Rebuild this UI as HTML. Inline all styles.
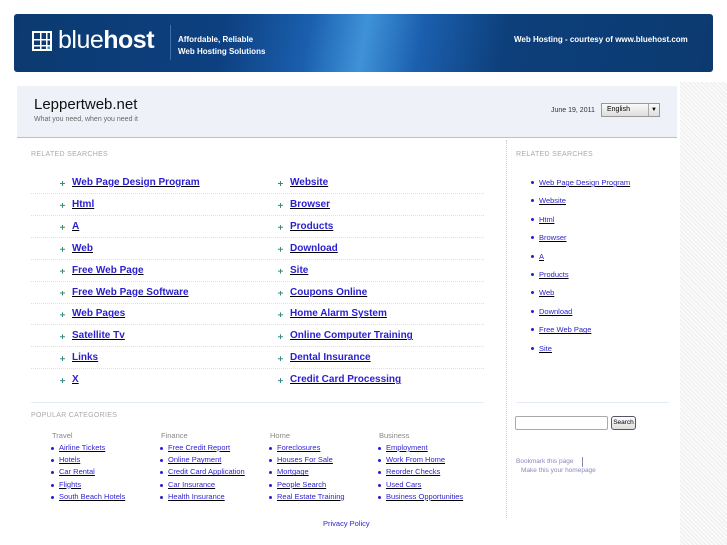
<!DOCTYPE html>
<html><head><meta charset="utf-8"><style>
*{margin:0;padding:0;box-sizing:border-box}
body{width:727px;height:545px;background:#fff;font-family:"Liberation Sans",sans-serif;position:relative;overflow:hidden}
.abs{position:absolute;white-space:nowrap}
a{color:#2a1fd0}
.banner{left:14px;top:14px;width:699px;height:58px;border-radius:3px;background:linear-gradient(100deg,#0c3a70 0%,#0d4080 30%,#1a5fae 42%,#3f92d8 50%,#1b5fae 58%,#0d3f7a 70%,#0c3a70 100%)}
.strip{left:680px;top:82px;width:47px;height:463px;background:repeating-linear-gradient(45deg,#eee 0 1px,#fafafa 1px 3px)}
.hdr{left:17px;top:86px;width:660px;height:52px;background:#eef2f8;border-bottom:1px solid #a9c2e6}
.lbl{font-size:7px;color:#aaa;letter-spacing:.3px}
.rl{font-size:10px;font-weight:bold;text-decoration:underline}
.bul{width:5px;height:5px;background:#3a8a82;clip-path:polygon(40% 0,60% 0,60% 40%,100% 40%,100% 60%,60% 60%,60% 100%,40% 100%,40% 60%,0 60%,0 40%,40% 40%)}
.div{left:31px;width:453px;height:0;border-top:1px dotted #dde}
.sl{font-size:7.5px;text-decoration:underline}
.dot{width:3px;height:3px;border-radius:50%;background:#2a1fd0}
</style></head><body>
<div class="abs banner"></div>
<div class="abs" style="left:32px;top:31px;width:20px;height:20px;border:2px solid #fff;background:linear-gradient(#fff,#fff) 6px 0/1.5px 100% no-repeat,linear-gradient(#fff,#fff) 12px 0/1.5px 100% no-repeat,linear-gradient(#fff,#fff) 0 6px/100% 1.5px no-repeat,linear-gradient(#fff,#fff) 0 12px/100% 1.5px no-repeat,linear-gradient(#29a3c8,#29a3c8) 13px 13px/4px 4px no-repeat"></div>
<div class="abs" style="left:58px;top:26px;font-size:25px;color:#fff;letter-spacing:-.5px">blue<b>host</b></div>
<div class="abs" style="left:170px;top:25px;width:1px;height:35px;background:#3f6fa8"></div>
<div class="abs" style="left:178px;top:34px;font-size:8px;color:#fff;font-weight:bold;line-height:12px">Affordable, Reliable<br>Web Hosting Solutions</div>
<div class="abs" style="left:514px;top:35px;font-size:8px;color:#fff;font-weight:bold">Web Hosting - courtesy of www.bluehost.com</div>
<div class="abs strip"></div>
<div class="abs hdr"></div>
<div class="abs" style="left:34px;top:96px;font-size:15px;color:#111">Leppertweb.net</div>
<div class="abs" style="left:34px;top:116px;font-size:7px;color:#666">What you need, when you need it</div>
<div class="abs" style="left:551px;top:107px;font-size:7px;color:#333">June 19, 2011</div>
<div class="abs" style="left:601px;top:103px;width:59px;height:14px;border:1px solid #999;background:linear-gradient(#fafafa,#ddd);font-size:7px;padding:2px 5px">English</div>
<div class="abs" style="left:648px;top:104px;width:11px;height:12px;border-left:1px solid #aaa;font-size:6px;text-align:center;line-height:12px">▼</div>
<div class="abs" style="left:506px;top:140px;height:378px;border-left:1px dotted #ccd"></div>
<div class="abs lbl" style="left:31px;top:151px">RELATED SEARCHES</div>
<div class="abs lbl" style="left:516px;top:151px">RELATED SEARCHES</div>
<div id="rs"></div>
<div class="abs" style="left:31px;top:402px;width:453px;border-top:1px solid #e6ecf5"></div>
<div class="abs" style="left:516px;top:402px;width:153px;border-top:1px solid #e6ecf5"></div>
<div class="abs lbl" style="left:31px;top:412px">POPULAR CATEGORIES</div>
<div id="pc"></div>
<div class="abs" style="left:515px;top:416px;width:93px;height:14px;border:1px solid #aaa;border-radius:2px"></div>
<div class="abs" style="left:611px;top:416px;width:25px;height:14px;border:1px solid #556;border-radius:3px;background:linear-gradient(#fff,#ddd);font-size:6.5px;text-align:center;line-height:12px">Search</div>
<div class="abs" style="left:516px;top:458px;font-size:6.5px;color:#8888bb">Bookmark this page</div>
<div class="abs" style="left:582px;top:457px;height:10px;border-left:1px solid #8888bb"></div>
<div class="abs" style="left:521px;top:467px;font-size:6.5px;color:#8888bb">Make this your homepage</div>
<div class="abs" style="left:323px;top:519px;font-size:7.5px"><a>Privacy Policy</a></div>
<script>
var L=["Web Page Design Program","Html","A","Web","Free Web Page","Free Web Page Software","Web Pages","Satellite Tv","Links","X"],
R=["Website","Browser","Products","Download","Site","Coupons Online","Home Alarm System","Online Computer Training","Dental Insurance","Credit Card Processing"],
S=["Web Page Design Program","Website","Html","Browser","A","Products","Web","Download","Free Web Page","Site"],h="";
for(var i=0;i<10;i++){var y=177+i*21.9;
h+='<div class="abs bul" style="left:60px;top:'+(y+4)+'px"></div><div class="abs rl" style="left:72px;top:'+y+'px"><a>'+L[i]+'</a></div>';
h+='<div class="abs bul" style="left:278px;top:'+(y+4)+'px"></div><div class="abs rl" style="left:290px;top:'+y+'px"><a>'+R[i]+'</a></div>';
if(i<9)h+='<div class="abs div" style="top:'+(y+16)+'px"></div>';
var z=178+i*18.4;h+='<div class="abs dot" style="left:531px;top:'+(z+3)+'px"></div><div class="abs sl" style="left:539px;top:'+z+'px"><a>'+S[i]+'</a></div>';}
document.getElementById("rs").innerHTML=h;h="";
var C=[["Travel",52,["Airline Tickets","Hotels","Car Rental","Flights","South Beach Hotels"]],["Finance",161,["Free Credit Report","Online Payment","Credit Card Application","Car Insurance","Health Insurance"]],["Home",270,["Foreclosures","Houses For Sale","Mortgage","People Search","Real Estate Training"]],["Business",379,["Employment","Work From Home","Reorder Checks","Used Cars","Business Opportunities"]]];
C.forEach(function(c){h+='<div class="abs" style="left:'+c[1]+'px;top:431px;font-size:7.5px;color:#888">'+c[0]+'</div>';
c[2].forEach(function(t,j){var y=443+j*12.2;h+='<div class="abs dot" style="left:'+(c[1]-1)+'px;top:'+(y+4)+'px"></div><div class="abs sl" style="left:'+(c[1]+7)+'px;top:'+y+'px"><a>'+t+'</a></div>';});});
document.getElementById("pc").innerHTML=h;
</script>
</body></html>
